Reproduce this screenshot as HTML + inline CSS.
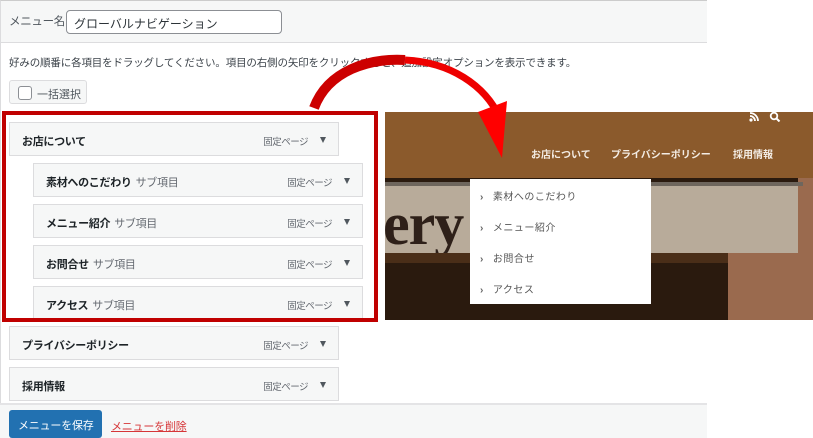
<!DOCTYPE html>
<html><head><meta charset="utf-8">
<style>
*{margin:0;padding:0;box-sizing:border-box}
body{width:813px;height:438px;overflow:hidden;background:#fff;font-family:"Liberation Sans","Noto Sans CJK JP",sans-serif;position:relative;color:#1d2327;white-space:nowrap}
.abs{position:absolute}
.topbar{left:0;top:0;width:707px;height:43px;background:#f6f7f7;border-top:1px solid #ccc;border-bottom:1px solid #dcdcde;border-left:1px solid #dcdcde}
.leftline{left:0;top:0;width:1px;height:438px;background:#dcdcde}
.lbl{left:9px;top:13px;font-size:11.5px;color:#50575e;letter-spacing:-0.3px}
.inp{left:66px;top:10px;width:216px;height:24px;border:1px solid #8c8f94;border-radius:4px;background:#fff;font-size:12px;padding:4px 7px;color:#2c3338}
.desc{left:9px;top:55px;font-size:10.5px;color:#3c434a;letter-spacing:-0.15px}
.bulk{left:9px;top:80px;width:78px;height:24px;border:1px solid #dcdcde;border-radius:3px;background:#f6f7f7;font-size:11px;color:#50575e;padding:5px 0 0 27px}
.bulk:before{content:"";position:absolute;left:8px;top:5px;width:12px;height:12px;border:1px solid #8c8f94;border-radius:3px;background:#fff}
.item{height:34px;background:#f6f7f7;border:1px solid #dcdcde;font-size:11px;font-weight:bold;padding:10px 0 0 12px;color:#1d2327;letter-spacing:-0.3px}
.item .sub{font-weight:normal;color:#646970;margin-left:4px}
.item .t{position:absolute;right:30px;top:11px;font-size:9.5px;font-weight:normal;color:#646970;letter-spacing:-0.5px}
.item .a{position:absolute;right:12px;top:14px;width:0;height:0;border-left:3.5px solid transparent;border-right:3.5px solid transparent;border-top:6px solid #50575e}
.p{left:9px;width:330px}
.s{left:33px;width:330px}
.redbox{left:2px;top:111px;width:376px;height:211px;border:4px solid #c00000}
.botbar{left:0;top:403px;width:707px;height:35px;background:#f6f7f7;border-top:2px solid #e4e4e6}
.save{left:9px;top:410px;width:93px;height:28px;background:#2271b1;border-radius:3px;color:#fff;font-size:11px;padding:7px 0 0 9px;letter-spacing:-0.2px}
.del{left:111px;top:418px;font-size:11px;color:#d63638;text-decoration:underline;letter-spacing:-0.2px}
.site{left:385px;top:112px;width:428px;height:208px;background:#2a1a0e;overflow:hidden}
.nav{left:0;top:0;width:428px;height:66px;background:#8b5a2c}
.nav span{position:absolute;top:34px;font-size:10px;font-weight:bold;color:#f3ece4}
.awn{left:0;top:71px;width:413px;height:70px;background:#b8ab9a}
.rod{left:0;top:70px;width:418px;height:4px;background:#6e665d}
.brick{left:343px;top:141px;width:85px;height:67px;background:#9a6a4e}
.brick2{left:413px;top:66px;width:15px;height:75px;background:#9a6a4e}
.frame{left:0;top:141px;width:343px;height:10px;background:#4a2e18}
.ery{left:-2px;top:78px;font-family:"Liberation Serif",serif;font-weight:bold;font-size:60px;color:#2e2019;letter-spacing:-1px}
.dd{left:85px;top:67px;width:181px;height:125px;background:#fff}
.dd div{position:absolute;left:10px;font-size:10px;color:#555;letter-spacing:0.5px}
.dd b{font-weight:bold;color:#666;margin-right:9px}
</style></head><body>
<div class="abs leftline"></div>
<div class="abs topbar"></div>
<div class="abs lbl">メニュー名</div>
<div class="abs inp">グローバルナビゲーション</div>
<div class="abs desc">好みの順番に各項目をドラッグしてください。項目の右側の矢印をクリックすると、追加設定オプションを表示できます。</div>
<div class="abs bulk">一括選択</div>

<div class="abs item p" style="top:122px">お店について<span class="t">固定ページ</span><span class="a"></span></div>
<div class="abs item s" style="top:163px">素材へのこだわり<span class="sub">サブ項目</span><span class="t">固定ページ</span><span class="a"></span></div>
<div class="abs item s" style="top:204px">メニュー紹介<span class="sub">サブ項目</span><span class="t">固定ページ</span><span class="a"></span></div>
<div class="abs item s" style="top:245px">お問合せ<span class="sub">サブ項目</span><span class="t">固定ページ</span><span class="a"></span></div>
<div class="abs item s" style="top:286px">アクセス<span class="sub">サブ項目</span><span class="t">固定ページ</span><span class="a"></span></div>
<div class="abs redbox"></div>
<div class="abs item p" style="top:326px">プライバシーポリシー<span class="t">固定ページ</span><span class="a"></span></div>
<div class="abs item p" style="top:367px">採用情報<span class="t">固定ページ</span><span class="a"></span></div>

<div class="abs botbar"></div>
<div class="abs save">メニューを保存</div>
<div class="abs del">メニューを削除</div>

<div class="abs site">
 <div class="abs nav">
  <svg class="abs" style="left:364px;top:0" width="12" height="10" viewBox="0 0 12 10"><circle cx="2" cy="8" r="1.6" fill="#fff"/><path d="M1 4a5 5 0 0 1 5 5M1 1a8 8 0 0 1 8 8" stroke="#fff" stroke-width="1.8" fill="none"/></svg>
  <svg class="abs" style="left:384px;top:0" width="12" height="10" viewBox="0 0 12 10"><circle cx="5" cy="4" r="3.3" stroke="#fff" stroke-width="1.8" fill="none"/><path d="M7.5 6.5l3 3" stroke="#fff" stroke-width="2"/></svg>
  <span style="left:146px">お店について</span>
  <span style="left:226px">プライバシーポリシー</span>
  <span style="left:348px">採用情報</span>
 </div>
 <div class="abs brick2"></div>
 <div class="abs awn"></div>
 <div class="abs rod"></div>
 <div class="abs ery">ery</div>
 <div class="abs frame"></div>
 <div class="abs brick"></div>
 <div class="abs dd">
  <div style="top:9px"><b>›</b>素材へのこだわり</div>
  <div style="top:40px"><b>›</b>メニュー紹介</div>
  <div style="top:71px"><b>›</b>お問合せ</div>
  <div style="top:102px"><b>›</b>アクセス</div>
 </div>
</div>

<svg class="abs" style="left:0;top:0" width="813" height="438" viewBox="0 0 813 438">
 <path d="M314 108 C328 70 370 58 405 60" stroke="#cc0000" stroke-width="10" fill="none"/>
 <path d="M405 60 C450 62 485 85 500 118" stroke="#ee0000" stroke-width="7" fill="none"/>
 <polygon points="478,112 507,101 502,158" fill="#ff0000"/>
</svg>
</body></html>
